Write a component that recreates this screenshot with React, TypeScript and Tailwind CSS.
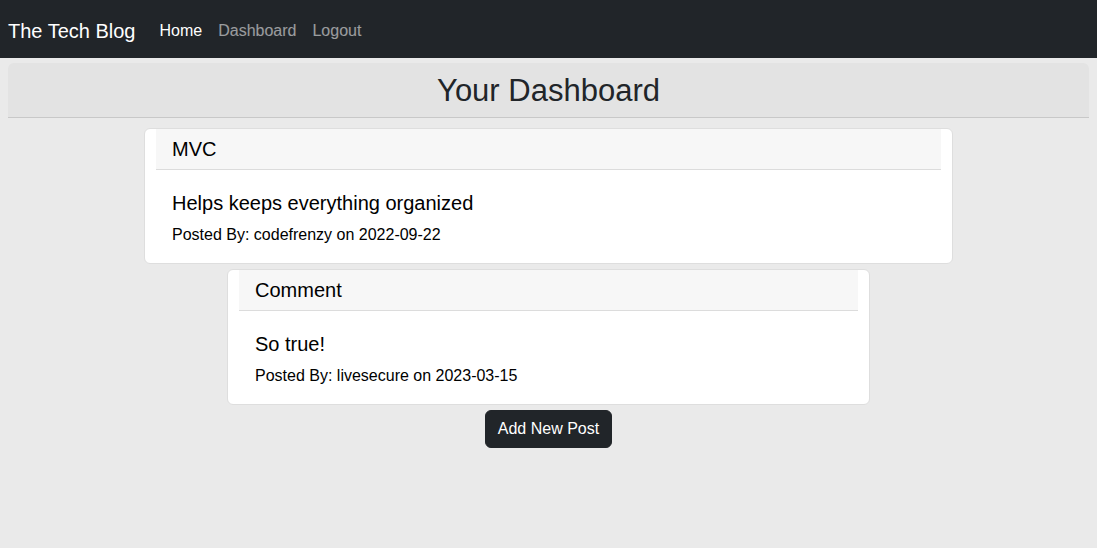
const font = { fontFamily: '"Liberation Sans", Arial, Helvetica, sans-serif' };

interface PostProps {
  title: string;
  body: string;
  author: string;
  date: string;
  width: string;
}

function PostCard({ title, body, author, date, width }: PostProps) {
  return (
    <div className={`${width} mx-auto bg-white border border-[#dedede] rounded-[6px] px-[11px]`}>
      {/* card header */}
      <div className="bg-[#f7f7f7] border-b border-[#dcdcdc] px-4 py-2">
        <h5 className="text-[20px] leading-[24px] text-black">{title}</h5>
      </div>
      {/* card body */}
      <div className="px-4 pt-[21px] pb-[16px]">
        <h5 className="text-[20px] leading-[24px] text-black mb-2">{body}</h5>
        <p className="text-[16px] leading-[24px] text-black">
          Posted By: {author} on {date}
        </p>
      </div>
    </div>
  );
}

export default function App() {
  return (
    <div className="h-[548px] bg-[#eaeaea]" style={font}>
      {/* navbar */}
      <nav className="h-[58px] bg-[#212529] flex items-center px-2 pt-[4px]">
        <span className="text-[20px] text-white mr-4 leading-[30px]">The Tech Blog</span>
        <ul className="flex items-center">
          <li className="px-2 text-[16px] text-white leading-[24px]">Home</li>
          <li className="px-2 text-[16px] text-white/55 leading-[24px]">Dashboard</li>
          <li className="px-2 text-[16px] text-white/55 leading-[24px]">Logout</li>
        </ul>
      </nav>

      <main className="px-2 pt-[5px]">
        <div className="h-[55px] bg-[#e3e3e3] rounded-t-[6px] border-b border-[#c8c8c8] flex items-center justify-center">
          <h2 className="text-[31px] leading-[37px] text-[#212529]">Your Dashboard</h2>
        </div>

        <div className="mt-[10px] flex flex-col">
          <PostCard
            width="w-[809px]"
            title="MVC"
            body="Helps keeps everything organized"
            author="codefrenzy"
            date="2022-09-22"
          />
          <div className="mt-[5px]">
            <PostCard
              width="w-[643px]"
              title="Comment"
              body="So true!"
              author="livesecure"
              date="2023-03-15"
            />
          </div>
          <div className="mt-[5px] flex justify-center">
            <button className="h-[38px] px-3 bg-[#212529] text-white text-[16px] rounded-[6px] border border-[#212529]">
              Add New Post
            </button>
          </div>
        </div>
      </main>
    </div>
  );
}
